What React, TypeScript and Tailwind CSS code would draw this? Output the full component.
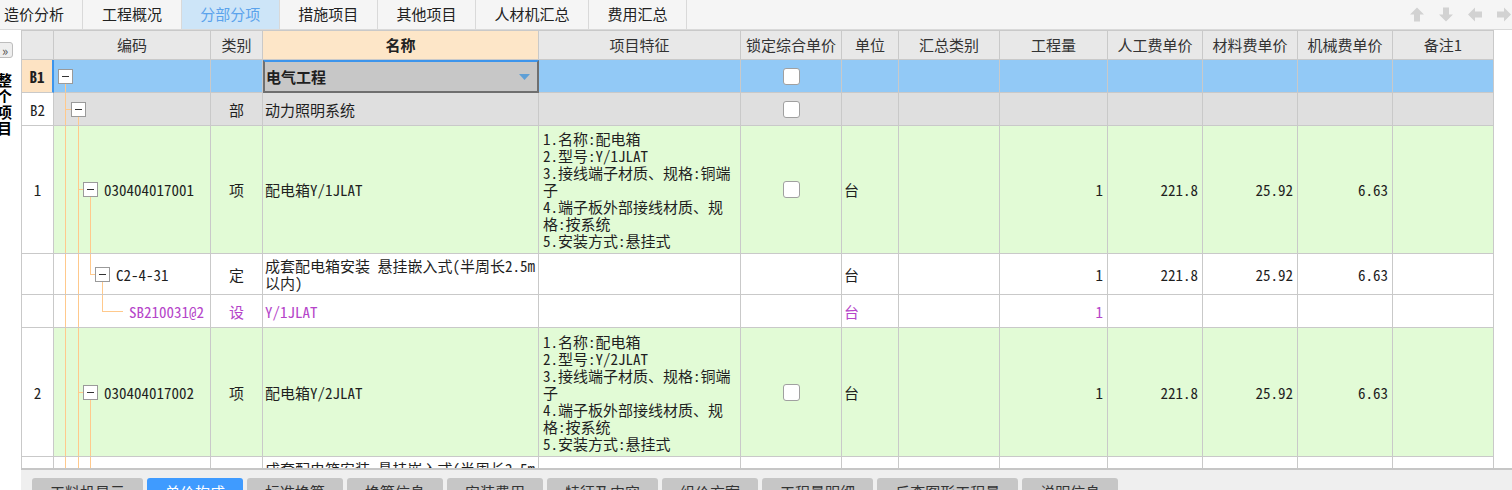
// Bill-of-quantities grid (分部分项) with the top module tabs, the tree of
// items in the 编码 column and the detail tabs along the bottom edge.

import React from "react";

const COLS =
  "grid grid-cols-[32px_157px_52px_276px_202px_101px_57px_101px_108px_95px_95px_95px_101px]";
const CJK = "font-['Noto_Sans_CJK_SC',sans-serif]";
const DATA = "font-['Noto_Sans_Mono_CJK_SC','Noto_Sans_CJK_SC',monospace]";
const LINE = "#ffc98c";

const TOP_TABS = ["造价分析", "工程概况", "分部分项", "措施项目", "其他项目", "人材机汇总", "费用汇总"];
const TOP_W = ["w-[85px] justify-start pl-[4px]", "w-[100px]", "w-[100px]", "w-[100px]", "w-[100px]", "w-[115px]", "w-[100px]"];

const HEADERS = ["", "编码", "类别", "名称", "项目特征", "锁定综合单价", "单位", "汇总类别", "工程量", "人工费单价", "材料费单价", "机械费单价", "备注1"];

const BOTTOM_TABS = ["工料机显示", "单价构成", "标准换算", "换算信息", "安装费用", "特征及内容", "组价方案", "工程量明细", "反查图形工程量", "说明信息"];

type Tree = {
  guides: number[]; // verticals running the full row height
  parent?: number; // vertical from the top down to the middle (last child)
  from?: number; // horizontal branch start
  box?: number; // left edge of the fold box
  leafTo?: number; // branch end for leaf rows
  open?: boolean; // line from the box down to the bottom
};

type Row = {
  num: string;
  h: string;
  tone: "sel" | "part" | "item" | "plain";
  tree: Tree;
  code?: string;
  kind?: string;
  name?: string;
  features?: string[];
  check?: boolean;
  unit?: string;
  qty?: string;
  labor?: string;
  material?: string;
  machine?: string;
  purple?: boolean;
  editing?: boolean;
};

const features = (model: string) => [
  "1.名称:配电箱",
  `2.型号:${model}`,
  "3.接线端子材质、规格:铜端",
  "子",
  "4.端子板外部接线材质、规",
  "格:按系统",
  "5.安装方式:悬挂式",
];

const PRICES = { unit: "台", qty: "1", labor: "221.8", material: "25.92", machine: "6.63" };

const ROWS: Row[] = [
  { num: "B1", h: "h-[33px]", tone: "sel", tree: { guides: [], box: 4, open: true }, name: "电气工程", check: true, editing: true },
  { num: "B2", h: "h-[33px]", tone: "part", tree: { guides: [11], from: 11, box: 17, open: true }, kind: "部", name: "动力照明系统", check: true },
  {
    num: "1", h: "h-[128px]", tone: "item", tree: { guides: [11, 24], from: 24, box: 29, open: true },
    code: "030404017001", kind: "项", name: "配电箱Y/1JLAT", features: features("Y/1JLAT"), check: true, ...PRICES,
  },
  {
    num: "", h: "h-[41px]", tone: "plain", tree: { guides: [11, 24], parent: 36, from: 36, box: 41, open: true },
    code: "C2-4-31", kind: "定", name: "成套配电箱安装 悬挂嵌入式(半周长2.5m以内)", ...PRICES,
  },
  {
    num: "", h: "h-[33px]", tone: "plain", purple: true, tree: { guides: [11, 24], parent: 48, from: 48, leafTo: 69 },
    code: "SB210031@2", kind: "设", name: "Y/1JLAT", unit: "台", qty: "1",
  },
  {
    num: "2", h: "h-[129px]", tone: "item", tree: { guides: [11, 24], from: 24, box: 29, open: true },
    code: "030404017002", kind: "项", name: "配电箱Y/2JLAT", features: features("Y/2JLAT"), check: true, ...PRICES,
  },
  {
    num: "", h: "h-[41px]", tone: "plain", tree: { guides: [11, 24], parent: 36, from: 36, box: 41, open: true },
    code: "C2-4-31", kind: "定", name: "成套配电箱安装 悬挂嵌入式(半周长2.5m以内)", ...PRICES,
  },
];

const TONE = {
  sel: "bg-[#92c9f6]",
  part: "bg-[#dfdfdf]",
  item: "bg-[#e2fbd6]",
  plain: "bg-white",
};

const INDENT: Record<number, string> = {
  4: "pl-[4px]",
  17: "pl-[17px]",
  29: "pl-[29px]",
  41: "pl-[41px]",
  75: "pl-[75px]",
};

function Cell({ className = "", children }: { className?: string; children?: React.ReactNode }) {
  return (
    <div className={`relative flex items-center overflow-hidden border-r border-b border-[#c9c9c9] ${className}`}>
      {children}
    </div>
  );
}

function TreeLines({ t }: { t: Tree }) {
  const mid = t.box !== undefined ? t.box + 7 : 0;
  return (
    <svg className="absolute inset-0 h-full w-full" stroke={LINE} strokeWidth="1" shapeRendering="crispEdges">
      {t.guides.map((x) => (
        <line key={x} x1={x + 0.5} x2={x + 0.5} y1="0" y2="100%" />
      ))}
      {t.parent !== undefined && <line x1={t.parent + 0.5} x2={t.parent + 0.5} y1="0" y2="50%" />}
      {t.from !== undefined && (
        <line x1={t.from} x2={t.leafTo ?? t.box ?? t.from} y1="50%" y2="50%" />
      )}
      {t.open && <line x1={mid + 0.5} x2={mid + 0.5} y1="50%" y2="100%" />}
    </svg>
  );
}

function FoldBox() {
  return (
    <span className="relative z-10 flex h-[15px] w-[15px] shrink-0 items-center justify-center border border-[#9a9a9a] bg-white">
      <span className="h-[1px] w-[7px] bg-[#333]" />
    </span>
  );
}

function Check() {
  return <span className="h-[17px] w-[17px] rounded-[3px] border border-[#a0a0a0] bg-white" />;
}

function GridRow({ r }: { r: Row }) {
  const ink = r.purple ? "text-[#b544c9]" : "text-[#1f1f1f]";
  const numCls =
    r.tone === "sel"
      ? "justify-center bg-[#fde3c3] font-bold border-r-2 border-r-[#3d95ec]"
      : "justify-center bg-white";
  const indent = INDENT[r.tree.box ?? (r.tree.leafTo ?? 0) + 6];

  return (
    <div className={`${COLS} ${r.h} ${TONE[r.tone]} ${ink} ${DATA} text-[15px] leading-[17px]`}>
      <Cell className={numCls}>{r.num}</Cell>
      <Cell className={indent}>
        <TreeLines t={r.tree} />
        {r.tree.box !== undefined && <FoldBox />}
        {r.code && <span className={`relative z-10 ${r.tree.box !== undefined ? "ml-[6px]" : ""}`}>{r.code}</span>}
      </Cell>
      <Cell className="justify-center">{r.kind}</Cell>
      {r.editing ? (
        <div className="relative flex items-center border-2 border-[#6f6f6f] border-t-[#3d95ec] bg-[#c7c7c7] pl-[1px] font-bold">
          {r.name}
          <svg className="absolute right-[7px] top-[12px]" width="11" height="6" viewBox="0 0 11 6">
            <path d="M0 0h11L5.5 6z" fill="#5e9fd6" />
          </svg>
        </div>
      ) : (
        <Cell className="pl-[2px]">{r.name}</Cell>
      )}
      <Cell className="pl-[4px]">
        {r.features && (
          <div className="whitespace-nowrap">
            {r.features.map((f) => (
              <div key={f}>{f}</div>
            ))}
          </div>
        )}
      </Cell>
      <Cell className="justify-center">{r.check && <Check />}</Cell>
      <Cell className="pl-[2px]">{r.unit}</Cell>
      <Cell />
      <Cell className="justify-end pr-[4px]">{r.qty}</Cell>
      <Cell className="justify-end pr-[4px]">{r.labor}</Cell>
      <Cell className="justify-end pr-[4px]">{r.material}</Cell>
      <Cell className="justify-end pr-[4px]">{r.machine}</Cell>
      <Cell />
    </div>
  );
}

function BlockArrow({ dir }: { dir: "up" | "down" | "left" | "right" }) {
  const rot = { up: "", down: "rotate-180", left: "-rotate-90", right: "rotate-90" }[dir];
  return (
    <svg className={`h-[17px] w-[16px] shrink-0 ${rot}`} viewBox="0 0 16 16">
      <path d="M8 1l7 7h-4v7H5V8H1z" fill="#d2d2d2" />
    </svg>
  );
}

export default function App() {
  return (
    <div className={`flex h-[490px] w-[1512px] flex-col overflow-hidden bg-white ${CJK}`}>
      {/* module tabs */}
      <div className="flex h-[30px] shrink-0 items-stretch border-b border-[#d9d9d9] bg-[#f5f5f5]">
        {TOP_TABS.map((t, i) => (
          <div
            key={t}
            className={`flex items-center justify-center border-r border-[#d9d9d9] text-[15px] ${TOP_W[i]} ${
              i === 2 ? "bg-[#cde5f8] text-[#5ba3ec]" : "text-[#222]"
            }`}
          >
            {t}
          </div>
        ))}
        <div className="ml-[722px] flex items-center gap-[13px]">
          <BlockArrow dir="up" />
          <BlockArrow dir="down" />
          <BlockArrow dir="left" />
          <BlockArrow dir="right" />
        </div>
      </div>

      <div className="flex min-h-0 flex-1">
        {/* collapsed project tree */}
        <div className="w-[21px] shrink-0 overflow-hidden">
          <div className="mt-[12px] -ml-[3px] flex h-[16px] w-[16px] items-center justify-center rounded-[3px] border border-[#bdbdbd] bg-[#eeeeee] text-[13px] leading-none text-[#555]">
            »
          </div>
          <div className="mt-[14px] -ml-[3px] w-[15px] text-[15px] font-bold leading-[16px] text-black">
            {"整个项目".split("").map((c) => (
              <div key={c}>{c}</div>
            ))}
          </div>
        </div>

        <div className="flex min-w-0 flex-1 flex-col">
          {/* grid */}
          <div className="h-[438px] shrink-0 overflow-hidden">
            <div className="w-fit border-t border-l border-[#c9c9c9]">
              <div className={`${COLS} h-[29px] bg-[#e8e8e8] text-[15px] text-[#333]`}>
                {HEADERS.map((h, i) => (
                  <Cell key={i} className={`justify-center ${i === 3 ? "bg-[#fde6c8] font-bold text-[#222]" : ""}`}>
                    {h}
                  </Cell>
                ))}
              </div>
              {ROWS.map((r, i) => (
                <GridRow key={i} r={r} />
              ))}
            </div>
          </div>

          {/* detail tabs */}
          <div className="flex flex-1 gap-[4px] border-t-2 border-[#c6c6c6] bg-[#efefef] pl-[11px] pt-[8px]">
            {BOTTOM_TABS.map((t, i) => (
              <div
                key={t}
                className={`flex h-[28px] shrink-0 items-center rounded-t-[3px] px-[18px] text-[15px] ${
                  i === 1 ? "bg-[#3f9bff] text-white" : "bg-[#c6c6c6] text-[#333]"
                }`}
              >
                {t}
              </div>
            ))}
          </div>
        </div>
      </div>
    </div>
  );
}
